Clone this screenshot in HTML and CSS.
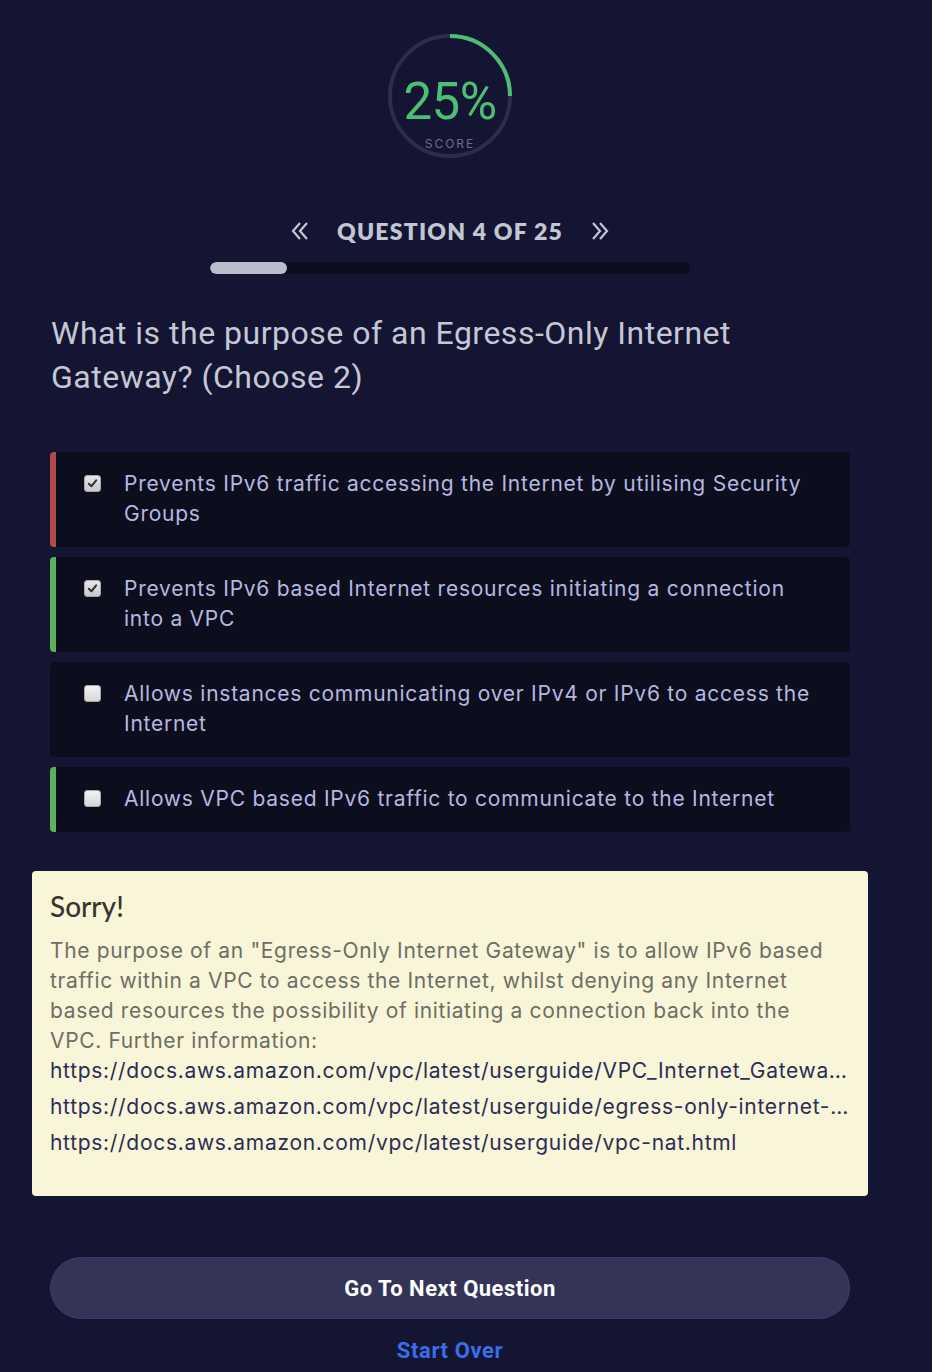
FILE: index.html
```html
<!DOCTYPE html>
<html lang="en">
<head>
<meta charset="utf-8">
<title>Quiz</title>
<link rel="stylesheet" href="styles.css">
</head>
<body>
<main class="page">
  <div class="score">
    <svg class="ring" width="126" height="126" viewBox="0 0 126 126">
      <circle cx="63" cy="63" r="60" fill="none" stroke="#2c2d4c" stroke-width="4"/>
      <path d="M63 3 A60 60 0 0 1 123 63" fill="none" stroke="#4cbf72" stroke-width="4"/>
    </svg>
    <div class="score-text">
      <span class="score-num">25%</span>
      <span class="score-label">SCORE</span>
    </div>
  </div>

  <div class="nav">
    <svg class="chev" width="18" height="20" viewBox="0 0 18 20"><path d="M9 2 L2 10 L9 18 M16 2 L9 10 L16 18" fill="none" stroke="#c1c6d1" stroke-width="2.2" stroke-linejoin="miter"/></svg>
    <span class="nav-title">QUESTION 4 OF 25</span>
    <svg class="chev" width="18" height="20" viewBox="0 0 18 20"><path d="M2 2 L9 10 L2 18 M9 2 L16 10 L9 18" fill="none" stroke="#c1c6d1" stroke-width="2.2" stroke-linejoin="miter"/></svg>
  </div>
  <div class="progress"><div class="progress-fill" style="width:16%"></div></div>

  <section class="quiz">
    <h1 class="question">What is the purpose of an Egress-Only Internet Gateway? (Choose 2)</h1>

    <ul class="options">
      <li class="option wrong">
        <span class="box checked"><svg viewBox="0 0 12 12" width="11" height="11"><path d="M2 6.3 L4.8 9 L10 2.6" fill="none" stroke="#333" stroke-width="2.2" stroke-linecap="round" stroke-linejoin="round"/></svg></span>
        <span class="opt-text">Prevents IPv6 traffic accessing the Internet by utilising Security Groups</span>
      </li>
      <li class="option right">
        <span class="box checked"><svg viewBox="0 0 12 12" width="11" height="11"><path d="M2 6.3 L4.8 9 L10 2.6" fill="none" stroke="#333" stroke-width="2.2" stroke-linecap="round" stroke-linejoin="round"/></svg></span>
        <span class="opt-text">Prevents IPv6 based Internet resources initiating a connection into a VPC</span>
      </li>
      <li class="option">
        <span class="box"></span>
        <span class="opt-text">Allows instances communicating over IPv4 or IPv6 to access the Internet</span>
      </li>
      <li class="option right">
        <span class="box"></span>
        <span class="opt-text">Allows VPC based IPv6 traffic to communicate to the Internet</span>
      </li>
    </ul>

    <div class="feedback">
      <h2 class="fb-title">Sorry!</h2>
      <p class="fb-body">The purpose of an "Egress-Only Internet Gateway" is to allow IPv6 based traffic within a VPC to access the Internet, whilst denying any Internet based resources the possibility of initiating a connection back into the VPC. Further information:</p>
      <a class="fb-link" href="#">https://docs.aws.amazon.com/vpc/latest/userguide/VPC_Internet_Gateway.html</a>
      <a class="fb-link" href="#">https://docs.aws.amazon.com/vpc/latest/userguide/egress-only-internet-gw.html</a>
      <a class="fb-link" href="#">https://docs.aws.amazon.com/vpc/latest/userguide/vpc-nat.html</a>
    </div>

    <button class="next">Go To Next Question</button>
    <a class="restart" href="#">Start Over</a>
  </section>
</main>
</body>
</html>
```

FILE: styles.css
```css
* { box-sizing: border-box; }
html, body { margin: 0; padding: 0; }
body {
  background: #141533;
  font-family: Inter, "Noto Sans", sans-serif;
  width: 932px;
  height: 1372px;
  overflow: hidden;
}
.page {
  width: 900px;
  display: flex;
  flex-direction: column;
  align-items: center;
}
.score {
  position: relative;
  width: 126px;
  height: 126px;
  margin-top: 33px;
}
.ring { display: block; }
.score-text {
  position: absolute;
  inset: 0;
  display: flex;
  flex-direction: column;
  align-items: center;
}
.score-num {
  margin-top: 44px;
  font-family: Roboto, sans-serif;
  font-size: 51px;
  line-height: 50px;
  color: #4cbf72;
  letter-spacing: -0.5px;
}
.score-label {
  margin-top: 9px;
  font-family: Inter, sans-serif;
  font-size: 12px;
  letter-spacing: 2px;
  color: #6c6f8e;
}
.nav {
  margin-top: 57px;
  display: flex;
  align-items: center;
  gap: 28px;
  color: #c1c6d1;
  height: 30px;
}
.chev { display: block; }
.nav-title {
  font-family: Lato, sans-serif;
  font-weight: 800;
  font-size: 23px;
  letter-spacing: 1.2px;
  line-height: 30px;
}
.progress {
  margin-top: 16px;
  width: 480px;
  height: 12px;
  border-radius: 6px;
  background: #0d0e1d;
  overflow: hidden;
}
.progress-fill {
  height: 100%;
  background: #b9bfca;
  border-radius: 6px;
}
.quiz {
  width: 800px;
  display: flex;
  flex-direction: column;
}
.question {
  margin: 37px 0 0 1px;
  font-family: Roboto, sans-serif;
  font-weight: 400;
  font-size: 32px;
  line-height: 44px;
  letter-spacing: 0.5px;
  color: #c4c8d5;
  width: 720px;
}
.options {
  list-style: none;
  margin: 53px 0 0;
  padding: 0;
  display: flex;
  flex-direction: column;
  gap: 10px;
}
.option {
  display: flex;
  align-items: flex-start;
  background: #0d0e1d;
  border-radius: 4px;
  padding: 17px 28px 18px 28px;
  border-left: 6px solid transparent;
}
.option.wrong { border-left-color: #b14b4b; }
.option.right { border-left-color: #5eb15a; }
.box {
  flex: none;
  width: 17px;
  height: 17px;
  margin-top: 6px;
  margin-right: 23px;
  border-radius: 3px;
  background: linear-gradient(#f2f2f2, #d8d8d8);
  border: 1px solid #a9a9a9;
  display: flex;
  align-items: center;
  justify-content: center;
}
.box.checked { background: linear-gradient(#e6e6e6, #c9c9c9); }
.opt-text {
  font-size: 21px;
  line-height: 30px;
  color: #b5b8e0;
  letter-spacing: 0.75px;
}
.feedback {
  margin: 39px -18px 0;
  background: #f8f5d8;
  border-radius: 4px;
  padding: 17px 18px 35px;
  display: flex;
  flex-direction: column;
}
.fb-title {
  margin: 0 0 12px;
  font-family: Lato, sans-serif;
  font-weight: 500;
  font-size: 28px;
  line-height: 36px;
  color: #36362f;
}
.fb-body {
  margin: 0 0 -3px;
  padding-right: 12px;
  font-size: 21px;
  line-height: 30px;
  color: #6e6e64;
  letter-spacing: 0.65px;
}
.fb-link {
  display: block;
  font-size: 21px;
  line-height: 36px;
  color: #2b2d55;
  text-decoration: none;
  white-space: nowrap;
  overflow: hidden;
  text-overflow: ellipsis;
  letter-spacing: 0.7px;
}
.next {
  margin-top: 61px;
  height: 62px;
  border-radius: 31px;
  background: #343459;
  border: 1px solid #3c3c60;
  color: #ffffff;
  font-family: Roboto, sans-serif;
  font-weight: 700;
  font-size: 22px;
  letter-spacing: 0.5px;
  cursor: pointer;
}
.restart {
  margin-top: 19px;
  align-self: center;
  font-family: Roboto, sans-serif;
  font-weight: 700;
  font-size: 22px;
  letter-spacing: 0.6px;
  color: #3a6ee8;
  text-decoration: none;
  line-height: 26px;
}
```
